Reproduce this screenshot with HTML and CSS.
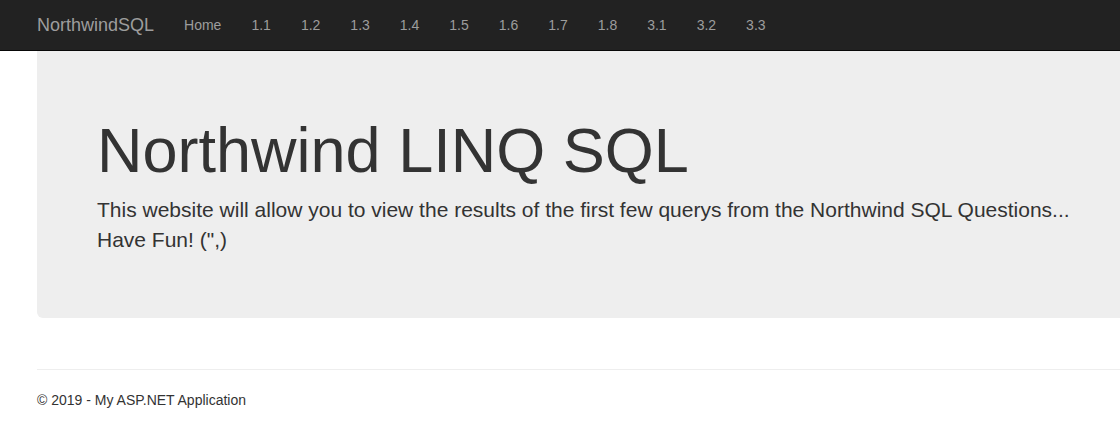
FILE: index.html
```html
<!DOCTYPE html>
<html lang="en">
<head>
<meta charset="utf-8">
<title>NorthwindSQL</title>
<link rel="stylesheet" href="styles.css">
</head>
<body>
<header class="navbar">
  <div class="container nav-inner">
    <a class="brand" href="#">NorthwindSQL</a>
    <ul class="nav">
      <li><a href="#">Home</a></li>
      <li><a href="#">1.1</a></li>
      <li><a href="#">1.2</a></li>
      <li><a href="#">1.3</a></li>
      <li><a href="#">1.4</a></li>
      <li><a href="#">1.5</a></li>
      <li><a href="#">1.6</a></li>
      <li><a href="#">1.7</a></li>
      <li><a href="#">1.8</a></li>
      <li><a href="#">3.1</a></li>
      <li><a href="#">3.2</a></li>
      <li><a href="#">3.3</a></li>
    </ul>
  </div>
</header>
<main class="container body-content">
  <section class="jumbotron">
    <h1>Northwind LINQ SQL</h1>
    <p>This website will allow you to view the results of the first few querys from the Northwind SQL Questions... Have Fun! (",)</p>
  </section>
  <hr class="sep">
  <footer class="footer">
    <p>&copy; 2019 - My ASP.NET Application</p>
  </footer>
</main>
</body>
</html>
```
FILE: styles.css
```css
html, body {
  margin: 0;
  padding: 0;
  overflow-x: hidden;
}
body {
  font-family: "Liberation Sans", Arial, Helvetica, sans-serif;
  font-size: 14px;
  line-height: 1.42857;
  color: #333;
  background: #fff;
}
.container {
  width: 1170px;
  margin-left: 22px;
  padding: 0 15px;
  box-sizing: border-box;
}
.navbar {
  background: #222;
  border-bottom: 1px solid #080808;
  height: 50px;
}
.nav-inner {
  display: flex;
  align-items: stretch;
  height: 50px;
}
.brand {
  display: block;
  height: 50px;
  box-sizing: border-box;
  padding: 15px 15px;
  margin-left: -15px;
  font-size: 18px;
  line-height: 20px;
  color: #9d9d9d;
  text-decoration: none;
}
.nav {
  display: flex;
  list-style: none;
  margin: 0;
  padding: 0;
}
.nav a {
  display: block;
  padding: 15px;
  line-height: 20px;
  font-size: 14px;
  color: #9d9d9d;
  text-decoration: none;
}
.jumbotron {
  background: #eee;
  border-radius: 0 0 6px 6px;
  padding: 48px 60px;
  margin: 0 0 30px;
}
.jumbotron h1 {
  font-size: 63px;
  font-weight: 500;
  line-height: 1.1;
  margin: 17px 0 10px;
  color: #333;
}
.jumbotron p {
  font-size: 21px;
  font-weight: 200;
  line-height: 30px;
  margin: 0 0 15px;
  max-width: 990px;
}
.sep {
  border: 0;
  border-top: 1px solid #eee;
  margin: 51px 0 20px;
}
.footer p {
  margin: 0 0 10px;
  line-height: 20px;
}
```
